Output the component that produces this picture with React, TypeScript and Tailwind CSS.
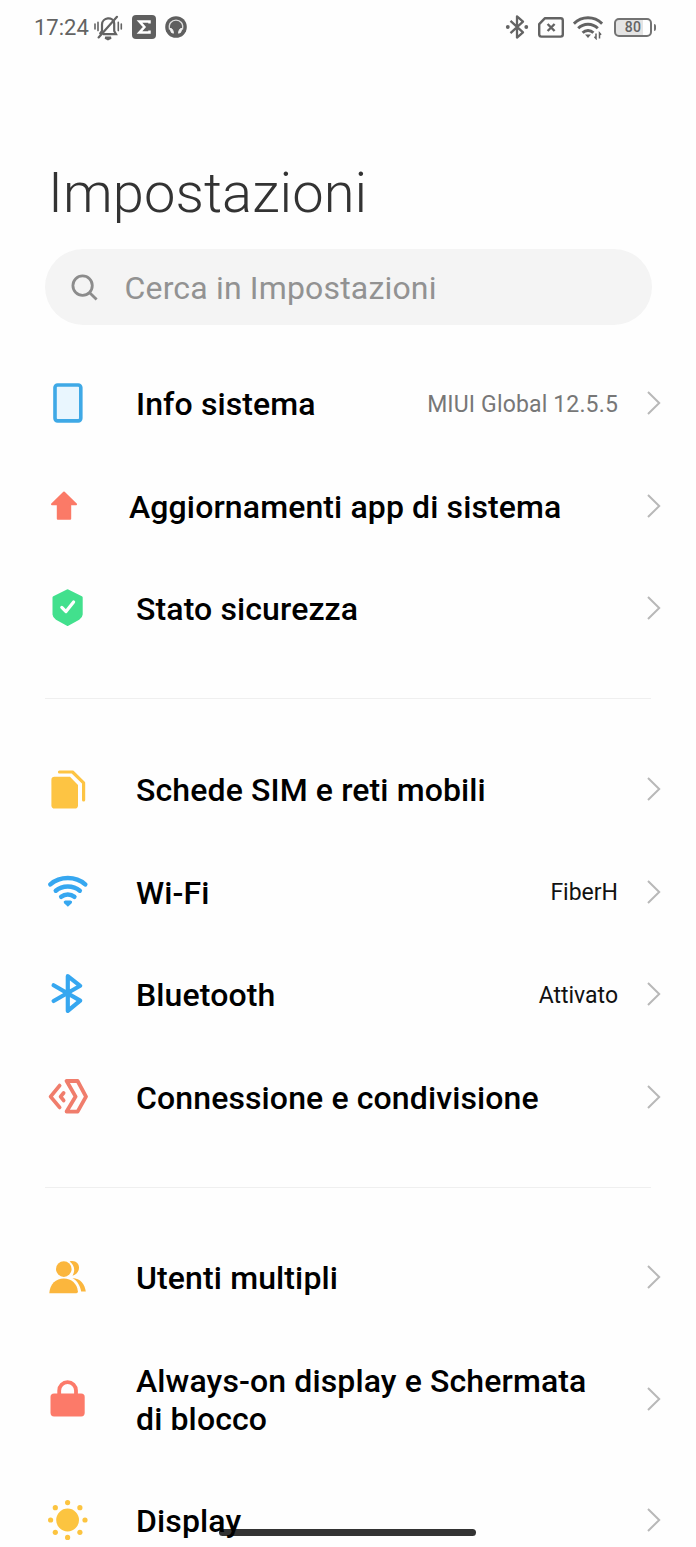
import React from 'react';

interface SettingItem {
    id: string;
    label: React.ReactNode;
    icon: React.ReactNode;
    value?: string;
    valueClass?: string;
    tall?: boolean;
    shifted?: boolean;
}

const Icon = ({ children }: { children: React.ReactNode }) => (
    <svg viewBox="0 0 40 40" className="w-10 h-10 shrink-0" fill="none" strokeLinecap="round" strokeLinejoin="round">
        {children}
    </svg>
);

const PhoneIcon = () => (
    <Icon>
        <rect x="7" y="2" width="25.8" height="35.9" rx="2.6" fill="#e9f6fe" stroke="#3fa9e6" strokeWidth="3.6" />
    </Icon>
);

const ArrowIcon = () => (
    <Icon>
        <path d="M20 6.5 32 18.2H26.2V32.8H13.8V18.2H8Z" fill="#fb7a67" stroke="#fb7a67" strokeWidth="2" />
    </Icon>
);

const ShieldIcon = () => (
    <Icon>
        <path d="M19.6 2.8 33.2 9.6V26.5Q33 29 30.5 30.4L19.6 36.4 8.7 30.4Q6.2 29 6 26.5V9.6Z" fill="#42e08d" stroke="#42e08d" strokeWidth="3" />
        <path d="M13.8 19.4 18 23.6 25.6 14" stroke="#fff" strokeWidth="3.2" />
    </Icon>
);

const SimIcon = () => (
    <Icon>
        <path d="M6.5 7.8H22L30 16V36.2Q30 39.6 26.6 39.6H6.8Q3.4 39.6 3.4 36.2V11Q3.4 7.8 6.5 7.8Z" fill="#fdc443" />
        <path d="M11.5 3H24.5L35.6 13.8V31" stroke="#fdc443" strokeWidth="3.2" />
    </Icon>
);

const WifiIcon = () => (
    <Icon>
        <g stroke="#36a7f0" strokeWidth="4.5">
            <path d="M2.4 12.4C12 4 27.6 4 37.2 12.4" />
            <path d="M7.8 18.7C14.4 13 25.2 13 31.8 18.7" />
            <path d="M13.2 24.8C17 21.6 22.6 21.6 26.4 24.8" />
        </g>
        <path d="M17.4 28.4H22.4Q25.2 29 23.4 31.4L19.9 34.8 16.4 31.4Q14.6 29 17.4 28.4Z" fill="#36a7f0" />
    </Icon>
);

const BluetoothIcon = () => (
    <Icon>
        <path d="M5.6 11.2 32.2 26.6 19.8 36.8V2.2L32.2 11.8 5.6 27" stroke="#36a7f0" strokeWidth="4.2" />
    </Icon>
);

const ShareIcon = () => (
    <Icon>
        <g stroke="#f07d6c" strokeWidth="3.8">
            <path d="M11.6 8.6 2.6 19.6 11.6 30.4" />
            <path d="M15.6 16 12.6 19.6 15.6 23.4" />
            <path d="M18.6 4H29.6L38 19.6 29.6 34.6H18.6L27.6 19.6Z" />
        </g>
    </Icon>
);

const UsersIcon = () => (
    <Icon>
        <g fill="#fbb63d">
            <circle cx="15.8" cy="12.1" r="7.8" />
            <path d="M1.3 36.3C1.8 26.5 8 21.4 15.8 21.4S29 26.5 29.9 34.3Q30 36.3 28.4 36.3Z" />
            <path d="M21.6 4.4C32.5 2 34.6 15.5 24.5 18.8 27.6 13.3 26.3 7.9 21.6 4.4Z" />
            <path d="M24.5 21.1C32.5 21.5 37 27.5 37.8 34.6H33.2C32 28.5 29.6 24.3 24.5 21.1Z" />
        </g>
    </Icon>
);

const LockIcon = () => (
    <Icon>
        <rect x="2.5" y="14.4" width="34.2" height="23" rx="3.6" fill="#fc7a69" />
        <path d="M11.2 17V11.5A8.4 8.4 0 0 1 28 11.5V17" stroke="#fc7a69" strokeWidth="3.8" />
    </Icon>
);

const SunIcon = () => (
    <Icon>
        <g fill="#fcc440">
            <circle cx="19.6" cy="20" r="11.4" />
            <circle cx="19.6" cy="2.6" r="2.6" />
            <circle cx="31.9" cy="7.7" r="2.6" />
            <circle cx="37" cy="20" r="2.6" />
            <circle cx="31.9" cy="32.3" r="2.6" />
            <circle cx="19.6" cy="37.4" r="2.6" />
            <circle cx="7.3" cy="32.3" r="2.6" />
            <circle cx="2.6" cy="20" r="2.6" />
            <circle cx="7.3" cy="7.7" r="2.6" />
        </g>
    </Icon>
);

const Chevron = () => (
    <svg viewBox="0 0 14 24" className="w-3.5 h-6 shrink-0" fill="none">
        <path d="M1 1 12.2 12 1 23" stroke="#b8b8b8" strokeWidth="2" />
    </svg>
);

const sections: SettingItem[][] = [
    [
        { id: 'info', label: 'Info sistema', icon: <PhoneIcon />, value: 'MIUI Global 12.5.5', valueClass: 'text-[#777] tracking-[0.15px]' },
        { id: 'updates', label: 'Aggiornamenti app di sistema', icon: <ArrowIcon />, shifted: true },
        { id: 'security', label: 'Stato sicurezza', icon: <ShieldIcon /> },
    ],
    [
        { id: 'sim', label: 'Schede SIM e reti mobili', icon: <SimIcon /> },
        { id: 'wifi', label: 'Wi-Fi', icon: <WifiIcon />, value: 'FiberH', valueClass: 'text-[#111]' },
        { id: 'bluetooth', label: 'Bluetooth', icon: <BluetoothIcon />, value: 'Attivato', valueClass: 'text-[#111]' },
        { id: 'share', label: 'Connessione e condivisione', icon: <ShareIcon /> },
    ],
    [
        { id: 'users', label: 'Utenti multipli', icon: <UsersIcon /> },
        { id: 'lock', label: <>Always-on display e Schermata<br />di blocco</>, icon: <LockIcon />, tall: true },
        { id: 'display', label: 'Display', icon: <SunIcon /> },
    ],
];

const SettingRow = ({ item }: { item: SettingItem }) => (
    <div className={`flex items-center pr-[35px] ${item.shifted ? 'pl-11' : 'pl-12'} ${item.tall ? 'h-[140px]' : 'h-[102.6px]'}`}>
        {item.icon}
        <div className={`flex-1 pt-[2px] whitespace-nowrap text-[32px] leading-[38px] font-medium text-black tracking-[0.12px] ${item.shifted ? 'ml-[45px]' : 'ml-12'}`}>
            {item.label}
        </div>
        {item.value && <span className={`mr-[29px] pt-[4px] text-[23px] ${item.valueClass}`}>{item.value}</span>}
        <Chevron />
    </div>
);

const StatusBar = () => (
    <div className="h-[54px] pl-[34px] pr-10 flex items-center justify-between text-[#636363]">
        <div className="flex items-center">
            <span className="text-[22px] leading-none w-[59px] pt-px">17:24</span>
            <svg viewBox="0 0 30 28" className="w-[30px] h-7" fill="none" stroke="currentColor" strokeWidth="2.2" strokeLinecap="round">
                <path d="M7.2 20.4 9 18V11.5C9 4.2 20.5 3 21.2 10.5V18L23 21.2H10.5" />
                <path d="M24 3.8 5.6 24.4" />
                <path d="M12.2 24.7H18L15 26.2Z" />
                <path d="M2 11V16M5 9.4V17.6M25.3 9.4V17.6M28.3 11V16" strokeWidth="1.6" />
            </svg>
            <svg viewBox="0 0 24 24" className="ml-[9px] w-6 h-6" fill="none">
                <rect width="24" height="24" rx="4" fill="#5f5f5f" />
                <path d="M17.5 8.6V6.4H7.4L12.4 12 7.4 17.6H17.5V15.4" stroke="#fff" strokeWidth="2.5" />
            </svg>
            <svg viewBox="0 0 22 22" className="ml-[9px] w-[22px] h-[22px]" fill="none">
                <circle cx="11" cy="11" r="10.8" fill="#5f5f5f" />
                <path d="M4.6 13.6C1.6 1 20.4 1 17.4 13.6" stroke="#ddd" strokeWidth="1.4" />
                <path d="M5 12.5Q8 12 8.4 17.2L6.4 16.4ZM17 12.5Q14 12 13.6 17.2L15.6 16.4Z" fill="#f3f3f3" stroke="#f3f3f3" />
            </svg>
        </div>
        <div className="flex items-center">
            <svg viewBox="0 0 24 26" className="w-6 h-[26px]" fill="none" stroke="currentColor" strokeWidth="2.3" strokeLinejoin="round">
                <path d="M5.5 6.8 18 18.3 12 23.6V2.4L18 7.7 5.5 19.2" />
                <circle cx="2.8" cy="13" r="1.9" fill="currentColor" stroke="none" />
                <circle cx="21.3" cy="13" r="1.9" fill="currentColor" stroke="none" />
            </svg>
            <svg viewBox="0 0 28 24" className="ml-2 w-7 h-6" fill="none" stroke="currentColor" strokeWidth="2.4" strokeLinejoin="round">
                <path d="M8 3.2H23.6Q25.8 3.2 25.8 5.4V19.6Q25.8 21.6 23.6 21.6H4.4Q2.2 21.6 2.2 19.6V9.2Z" />
                <path d="M10.6 9 17.6 16M17.6 9 10.6 16" />
            </svg>
            <svg viewBox="0 0 30 26" className="ml-2 w-[30px] h-[26px]" fill="none" stroke="currentColor" strokeWidth="2.9">
                <path d="M.9 9.6C8.8 1.8 21.2 1.8 29.1 9.6" />
                <path d="M5.2 14.3C10.7 8.8 19.3 8.8 24.8 14.3" />
                <path d="M9.6 18.8C12.6 15.7 17.4 15.7 20.4 18.8" />
                <path d="M12 20.4H18L15 24Z" fill="currentColor" stroke="none" />
                <path d="M23 19.5V24.5L21.4 22.8M26.5 24.5V19L28.1 20.8" strokeWidth="1.5" />
            </svg>
            <div className="ml-[11px] w-[38px] h-[19px] rounded-[5px] border-2 border-[#737373] bg-[linear-gradient(to_right,#e4e4e4_78%,#fff_78%)] flex items-center justify-center text-[14px] leading-none font-medium tracking-[0.4px]">
                80
            </div>
            <div className="ml-[2px] w-[2px] h-[7px] rounded-r bg-[#737373]" />
        </div>
    </div>
);

export default function App() {
    return (
        <div className="relative isolate w-[696px] h-[1547px] overflow-hidden bg-[#fefefe] font-[Roboto,sans-serif]">
            <StatusBar />
            <h1 className="mt-[106px] ml-12 text-[56px] leading-[66px] font-light text-[#333] tracking-[0.1px]">Impostazioni</h1>
            <div className="mt-[23px] ml-[45px] w-[607px] h-[76px] rounded-full bg-[#f4f4f4] flex items-center pl-[26px]">
                <svg viewBox="0 0 28 28" className="mt-px w-7 h-7" fill="none" stroke="#8c8c8c" strokeWidth="2.8">
                    <circle cx="11.6" cy="11.6" r="9.7" />
                    <path d="M18.4 18.4 25.6 25.6" />
                </svg>
                <span className="ml-[25.5px] pt-[2px] text-[32px] leading-[38px] text-[#929292] tracking-[0.17px]">Cerca in Impostazioni</span>
            </div>
            <div className="mt-[27px]">
                {sections.map((items, i) => (
                    <div key={i}>
                        {i > 0 && (
                            <div className="h-[78px] flex items-center px-[45px]">
                                <div className="w-full h-px bg-[#efefef]" />
                            </div>
                        )}
                        {items.map((item) => (
                            <SettingRow key={item.id} item={item} />
                        ))}
                    </div>
                ))}
            </div>
            {/* Gesture bar */}
            <div className="absolute -z-10 left-[219px] bottom-[11px] w-[257px] h-[7px] rounded-full bg-[#333]" />
        </div>
    );
}
